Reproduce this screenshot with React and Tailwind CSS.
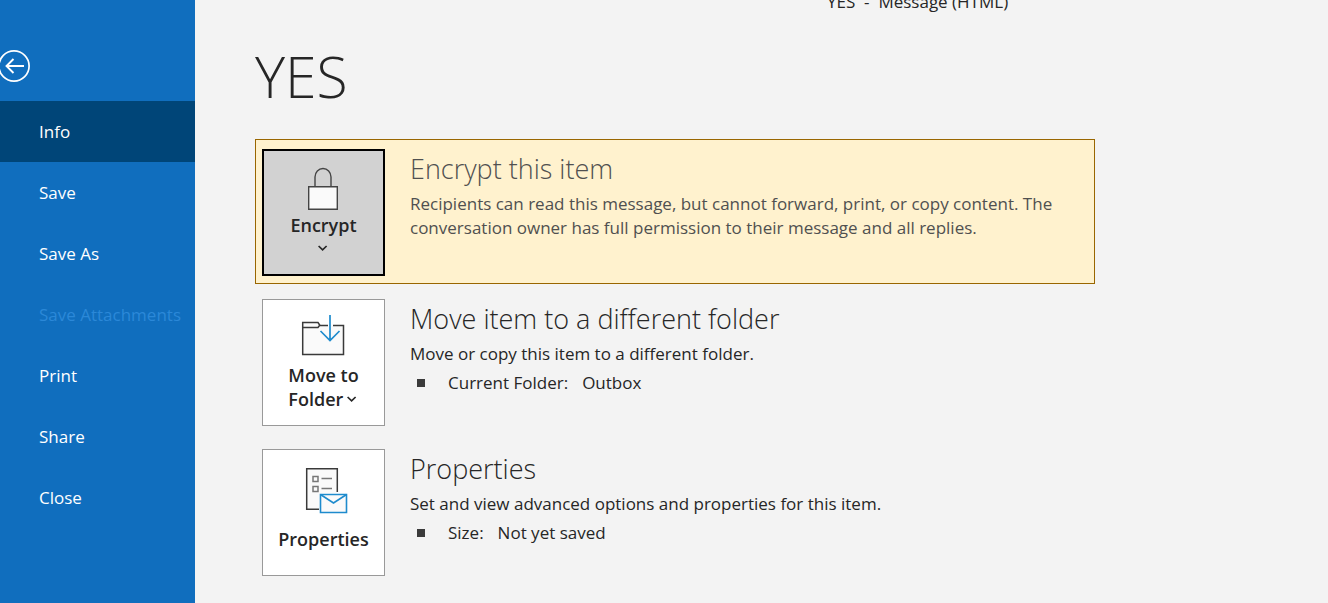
import React, { useState } from "react";
import clsx from "clsx";

const NAV = [
  { label: "Info" },
  { label: "Save" },
  { label: "Save As" },
  { label: "Save Attachments", disabled: true },
  { label: "Print" },
  { label: "Share" },
  { label: "Close" },
];

const BackIcon = () => (
  <svg width="32" height="32" viewBox="0 0 32 32" fill="none" stroke="#fff">
    <circle cx="16" cy="16" r="15.1" strokeWidth="1.700" />
    <path d="M26 16H8.500M15.500 9l-7 7 7 7" strokeWidth="1.900" />
  </svg>
);

const LockIcon = () => (
  <svg width="48" height="48" viewBox="0 0 48 48" fill="none" stroke="#444" strokeWidth="1.4">
    <path d="M15 24V15a8 8.500 0 0 1 16 0V24" />
    <path d="M8.700 24.700h28.600v22.600H8.700z" fill="#fafafa" />
  </svg>
);

const FolderIcon = () => (
  <svg width="48" height="48" viewBox="0 0 48 48" fill="none">
    <path d="M2.700 14.700V46.500H43.500V17.500H21l-2-2.800z" fill="#fafafa" />
    <path
      d="M28 17.500H19.500l-1.500 2H2.700M33 17.500H43.500V46.500H2.700V14.500H18l2 3"
      stroke="#3a3a3a"
      strokeWidth="1.500"
    />
    <path d="M30 7V32.500M20.500 23l9.500 9.500 9.500-9.500" stroke="#1e8bcd" strokeWidth="1.700" />
  </svg>
);

const PropertiesIcon = () => (
  <svg width="48" height="48" viewBox="0 0 48 48" fill="none">
    <path d="M7 3H37V27H20V43H7z" fill="#fafafa" />
    <path d="M19 43.300H6.700V2.700H37.300V26" stroke="#3a3a3a" strokeWidth="1.500" />
    <path
      d="M13 10.500h5v5h-5zM13 20.500h5v5h-5zM21.500 12.500h10.500M21.500 22.500h10.500"
      stroke="#777"
      strokeWidth="1.500"
    />
    <path d="M20.500 28.500H46.500V46.500H20.500z" fill="#fafafa" stroke="#1e8bcd" strokeWidth="1.600" />
    <path d="M20.500 28.500l13 8.500 13-8.500" stroke="#1e8bcd" strokeWidth="1.600" />
  </svg>
);

const Chevron = () => (
  <svg width="10" height="6" viewBox="0 0 10 6" fill="none" stroke="#262626" strokeWidth="1.700">
    <path d="M.6 1l4 3.800 4-3.800" />
  </svg>
);

const Tile = ({ children, active }) => (
  <button
    type="button"
    className={clsx(
      "flex h-[127px] w-[123px] shrink-0 flex-col items-center text-lg leading-6 font-semibold text-[#262626]",
      active ? "border-2 border-black bg-[#d2d2d2]" : "border border-[#999] bg-white"
    )}
  >
    {children}
  </button>
);

const Section = ({ tile, title, text, detail, highlighted }) => (
  <section
    className={clsx(
      "flex max-w-[840px] gap-[25px] border px-1.5 pt-[9px] pb-[7px]",
      highlighted ? "border-[#996600] bg-[#fff2ce] text-[#505050]" : "border-transparent"
    )}
  >
    {tile}
    <div className="min-w-0 flex-1">
      <h2 className="text-[27px] leading-10 font-light">{title}</h2>
      <p className="mt-[3px] leading-6">{text}</p>
      {detail && (
        <ul className="mt-[5px] leading-6">
          <li className="flex items-center">
            <span className="mr-[23px] ml-[7px] size-2 bg-[#3a3a3a]" />
            <span>{detail.label}:</span>
            <span className="ml-3.5">{detail.value}</span>
          </li>
        </ul>
      )}
    </div>
  </section>
);

export default function App() {
  const [current, setCurrent] = useState("Info");

  return (
    <div className="flex min-h-screen bg-[#f3f3f3] font-['Open_Sans','Noto_Sans',sans-serif] text-[17px] text-[#262626]">
      <aside className="w-[195px] shrink-0 bg-[#106ebe] pt-[50px]">
        <button type="button" aria-label="Back" className="-ml-0.5 block">
          <BackIcon />
        </button>
        <nav className="mt-[19px]">
          {NAV.map((item) => (
            <button
              key={item.label}
              type="button"
              disabled={item.disabled}
              onClick={() => setCurrent(item.label)}
              className={clsx(
                "block h-[61px] w-full pl-[39px] text-left whitespace-nowrap",
                item.disabled ? "text-[#2b88d8]" : "text-white",
                current === item.label && "bg-[#004578]"
              )}
            >
              {item.label}
            </button>
          ))}
        </nav>
      </aside>

      <main className="min-w-0 flex-1 overflow-hidden pl-[60px]">
        <div className="-mt-2.5 pl-[572px] leading-6 whitespace-pre">YES  -  Message (HTML)</div>
        <h1 className="mt-[22px] text-[57px] leading-20 font-light">YES</h1>
        <div className="mt-[23px] flex flex-col gap-[5px]">
          <Section
            highlighted
            title="Encrypt this item"
            text="Recipients can read this message, but cannot forward, print, or copy content. The conversation owner has full permission to their message and all replies."
            tile={
              <Tile active>
                <span className="mt-[11px]">
                  <LockIcon />
                </span>
                <span className="mt-[3px]">Encrypt</span>
                <span className="mt-2 pr-0.5">
                  <Chevron />
                </span>
              </Tile>
            }
          />
          <Section
            title="Move item to a different folder"
            text="Move or copy this item to a different folder."
            detail={{ label: "Current Folder", value: "Outbox" }}
            tile={
              <Tile>
                <span className="mt-2">
                  <FolderIcon />
                </span>
                <span className="mt-[7px] text-left">
                  Move to
                  <span className="flex items-center gap-1">
                    Folder <Chevron />
                  </span>
                </span>
              </Tile>
            }
          />
          <Section
            title="Properties"
            text="Set and view advanced options and properties for this item."
            detail={{ label: "Size", value: "Not yet saved" }}
            tile={
              <Tile>
                <span className="mt-4">
                  <PropertiesIcon />
                </span>
                <span className="mt-[13px]">Properties</span>
              </Tile>
            }
          />
        </div>
      </main>
    </div>
  );
}
